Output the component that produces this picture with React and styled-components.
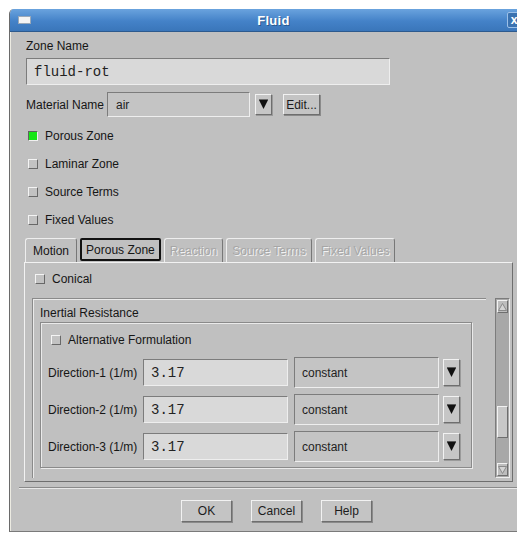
import React from "react";
import styled, { createGlobalStyle, css } from "styled-components";

const Global = createGlobalStyle`
  html, body { margin: 0; padding: 0; background: #fff; }
  body {
    font-family: "Liberation Sans", Arial, sans-serif;
    font-size: 12px;
    color: #161616;
  }
  * { box-sizing: border-box; }
`;

const raised = css`
  border-top: 1px solid #f2f2f2;
  border-left: 1px solid #f2f2f2;
  border-right: 1px solid #6e6e6e;
  border-bottom: 1px solid #6e6e6e;
`;

const sunken = css`
  border-top: 1px solid #7c7c7c;
  border-left: 1px solid #7c7c7c;
  border-right: 1px solid #eeeeee;
  border-bottom: 1px solid #eeeeee;
`;

const etched = css`
  border: 1px solid #8a8a8a;
  box-shadow: inset 1px 1px 0 #eaeaea, 1px 1px 0 #eaeaea;
`;

const Screen = styled.div`
  width: 517px;
  height: 533px;
  overflow: hidden;
  padding: 9px 0 0 9px;
`;

const Frame = styled.div`
  width: 520px;
  height: 523px;
  display: flex;
  flex-direction: column;
  background: #c0c0c0;
  border-left: 1px solid #6a6a6a;
  border-bottom: 1px solid #7a7a7a;
  border-top-left-radius: 5px;
  box-shadow: inset 1px 0 0 #ecebe2;
  overflow: hidden;
`;

const TitleBar = styled.div`
  height: 23px;
  flex: none;
  display: grid;
  grid-template-columns: 1fr auto 1fr;
  align-items: center;
  padding: 0 0 0 8px;
  background: linear-gradient(#6aa3de, #4482c8 55%, #3a76ba);
  border-bottom: 1px solid #2d5a8e;
  color: #fff;
`;

const WinIcon = styled.div`
  width: 13px;
  height: 8px;
  background: #f4f4f4;
  border: 1px solid #9aa8b8;
`;

const Title = styled.div`
  font-weight: bold;
  font-size: 13px;
  letter-spacing: 0.3px;
  text-shadow: 1px 1px 0 #2a5a90;
`;

const CloseBox = styled.div`
  justify-self: end;
  width: 14px;
  height: 16px;
  margin-right: 8px;
  border: 1px solid #9cc0e8;
  border-radius: 2px;
  background: #3b72b0;
  color: #fff;
  font-weight: bold;
  font-size: 12px;
  line-height: 14px;
  text-align: center;
`;

const Body = styled.div`
  flex: 1;
  display: flex;
  flex-direction: column;
  padding: 0 16px 0 14px;
`;

const Top = styled.div`
  padding-left: 2px;
  display: flex;
  flex-direction: column;
`;

const Label = styled.div`
  line-height: 14px;
  white-space: nowrap;
  ${(p) => p.$width && `width: ${p.$width}px; flex: none;`}
`;

const Field = styled.div`
  ${sunken};
  height: ${(p) => p.$h || 27}px;
  width: ${(p) => p.$w}px;
  flex: none;
  display: flex;
  align-items: center;
  padding-left: ${(p) => p.$pad || 7}px;
  margin-left: ${(p) => p.$ml || 0}px;
  background: ${(p) => (p.$light ? "#d9d9d9" : "#c4c4c4")};
  font-family: ${(p) => (p.$mono ? '"Liberation Mono", "Courier New", monospace' : "inherit")};
  font-size: ${(p) => (p.$mono ? 14 : 12)}px;
  color: #222;
`;

const Row = styled.div`
  display: flex;
  align-items: center;
  gap: ${(p) => p.$gap || 0}px;
  height: ${(p) => p.$h || 18}px;
  margin-top: ${(p) => p.$mt || 0}px;
  flex: none;
`;

const DropButton = styled.div`
  ${raised};
  width: ${(p) => p.$w || 17}px;
  height: ${(p) => p.$h || 27}px;
  flex: none;
  display: flex;
  align-items: center;
  justify-content: center;
  background: #c6c6c6;
  box-shadow: 1px 1px 0 #9a9a9a;
  margin-left: ${(p) => p.$ml || 0}px;
`;

const Arrow = () => (
  <svg width="9" height="11" viewBox="0 0 9 11">
    <path d="M0 1h9L4.5 10z" fill="#111" />
    <path d="M0 0h9" stroke="#111" strokeWidth="1.2" />
  </svg>
);

const PushButton = styled.div`
  ${raised};
  height: ${(p) => p.$h || 22}px;
  width: ${(p) => p.$w}px;
  flex: none;
  display: flex;
  align-items: center;
  justify-content: center;
  background: #c4c4c4;
  box-shadow: 1px 1px 0 #8a8a8a;
  font-size: 12px;
  color: #1c1c1c;
  margin-left: ${(p) => p.$ml || 0}px;
`;

const CheckRow = styled.div`
  display: flex;
  align-items: center;
  gap: 7px;
  height: ${(p) => p.$h || 28}px;
  padding-left: ${(p) => p.$indent ?? 2}px;
  flex: none;
`;

const Box = styled.span`
  width: 10px;
  height: 10px;
  flex: none;
  background: ${(p) => (p.$on ? "#16e616" : "#c2c2c2")};
  border-top: 1px solid ${(p) => (p.$on ? "#606060" : "#f4f4f4")};
  border-left: 1px solid ${(p) => (p.$on ? "#606060" : "#f4f4f4")};
  border-right: 1px solid ${(p) => (p.$on ? "#f0f0f0" : "#686868")};
  border-bottom: 1px solid ${(p) => (p.$on ? "#f0f0f0" : "#686868")};
`;

const Tabs = styled.div`
  display: flex;
  align-items: flex-end;
  gap: 3px;
  height: 24px;
  margin-top: 4px;
  padding-left: 1px;
  flex: none;
`;

const Tab = styled.div`
  height: 24px;
  padding: 0 7px;
  display: flex;
  align-items: center;
  white-space: nowrap;
  border-top-left-radius: 3px;
  border-top-right-radius: 3px;
  border-top: 1px solid #eeeeee;
  border-left: 1px solid #eeeeee;
  border-right: 1px solid #777;
  background: #c0c0c0;
  ${(p) =>
    p.$active &&
    css`
      border: 2px solid #111;
      border-radius: 2px;
      height: 23px;
      margin-bottom: 1px;
      padding: 0 4px;
    `}
  ${(p) =>
    p.$disabled &&
    css`
      padding: 0 5px;
      color: #a6a6a6;
      text-shadow: 1px 1px 0 #f2f2f2;
    `}
`;

const Panel = styled.div`
  ${raised};
  height: 220px;
  flex: none;
  display: flex;
  flex-direction: column;
  padding: 7px 2px 3px 10px;
`;

const ScrollArea = styled.div`
  flex: 1;
  display: flex;
  margin: 10px 0 0 -3px;
  gap: 9px;
  min-height: 0;
`;

const Viewport = styled.div`
  flex: 1;
  overflow: hidden;
  min-width: 0;
`;

const OuterGroup = styled.div`
  ${etched};
  width: 455px;
  height: 200px;
  padding: 7px 14px 0 7px;
`;

const InnerGroup = styled.div`
  ${etched};
  height: 146px;
  margin-top: 2px;
  padding: 8px 0 0 7px;
  display: flex;
  flex-direction: column;
`;

const ScrollBar = styled.div`
  ${sunken};
  width: 15px;
  flex: none;
  display: flex;
  flex-direction: column;
  background: #a8a8a8;
  padding: 1px;
`;

const ScrollStep = styled.div`
  height: 13px;
  flex: none;
  display: flex;
  align-items: center;
  justify-content: center;
  background: #bdbdbd;
  ${raised};
`;

const ScrollThumb = styled.div`
  ${raised};
  height: 32px;
  flex: none;
  background: #c8c8c8;
  margin-top: ${(p) => p.$offset}px;
`;

const Spacer = styled.div`
  flex: 1;
`;

const Gap = styled.div`
  height: ${(p) => p.$h}px;
  flex: none;
`;

const Footer = styled.div`
  flex: 1;
  display: flex;
  justify-content: center;
  align-items: flex-start;
  gap: 19px;
  margin: 5px -16px 0 -5px;
  padding: 12px 0 0 5px;
  border-top: 1px solid #8a8a8a;
  box-shadow: inset 0 1px 0 #e8e8e8;
`;

const StepArrow = ({ down }) => (
  <svg width="9" height="8" viewBox="0 0 9 8">
    <path
      d={down ? "M0.5 0.5h8L4.5 7.5z" : "M0.5 7.5h8L4.5 0.5z"}
      fill="#d4d4d4"
      stroke="#8a8a8a"
    />
  </svg>
);

const directions = ["Direction-1 (1/m)", "Direction-2 (1/m)", "Direction-3 (1/m)"];
const flags = [
  { label: "Porous Zone", on: true },
  { label: "Laminar Zone" },
  { label: "Source Terms" },
  { label: "Fixed Values" },
];

export default function App() {
  return (
    <Screen>
      <Global />
      <Frame>
        <TitleBar>
          <WinIcon />
          <Title>Fluid</Title>
          <CloseBox>x</CloseBox>
        </TitleBar>
        <Body>
          <Top>
            <Row $mt={7} $h={14}>
              <Label>Zone Name</Label>
            </Row>
            <Row $mt={5} $h={27}>
              <Field $w={364} $light $mono>fluid-rot</Field>
            </Row>
            <Row $mt={7} $h={25} $gap={3}>
              <Label>Material Name</Label>
              <Field $w={143} $h={25} $pad={8}>air</Field>
              <DropButton $w={17} $h={21} $ml={2}>
                <Arrow />
              </DropButton>
              <PushButton $w={37} $h={21} $ml={8}>Edit...</PushButton>
            </Row>
            <Gap $h={5} />
            {flags.map((f) => (
              <CheckRow key={f.label}>
                <Box $on={f.on} />
                {f.label}
              </CheckRow>
            ))}
          </Top>
          <Tabs>
            <Tab>Motion</Tab>
            <Tab $active>Porous Zone</Tab>
            <Tab $disabled>Reaction</Tab>
            <Tab $disabled>Source Terms</Tab>
            <Tab $disabled>Fixed Values</Tab>
          </Tabs>
          <Panel>
            <CheckRow $h={18} $indent={0}>
              <Box />
              Conical
            </CheckRow>
            <ScrollArea>
              <Viewport>
                <OuterGroup>
                  <Label>Inertial Resistance</Label>
                  <InnerGroup>
                    <CheckRow $h={18} $indent={3}>
                      <Box />
                      Alternative Formulation
                    </CheckRow>
                    {directions.map((d, i) => (
                      <Row key={d} $h={31} $mt={i === 0 ? 8 : 6}>
                        <Label $width={95}>{d}</Label>
                        <Field $w={145} $light $mono>3.17</Field>
                        <Field $w={145} $h={31} $ml={6}>constant</Field>
                        <DropButton $ml={4}>
                          <Arrow />
                        </DropButton>
                      </Row>
                    ))}
                  </InnerGroup>
                </OuterGroup>
              </Viewport>
              <ScrollBar>
                <ScrollStep>
                  <StepArrow />
                </ScrollStep>
                <ScrollThumb $offset={93} />
                <Spacer />
                <ScrollStep>
                  <StepArrow down />
                </ScrollStep>
              </ScrollBar>
            </ScrollArea>
          </Panel>
          <Footer>
            <PushButton $w={51}>OK</PushButton>
            <PushButton $w={51}>Cancel</PushButton>
            <PushButton $w={51}>Help</PushButton>
          </Footer>
        </Body>
      </Frame>
    </Screen>
  );
}
